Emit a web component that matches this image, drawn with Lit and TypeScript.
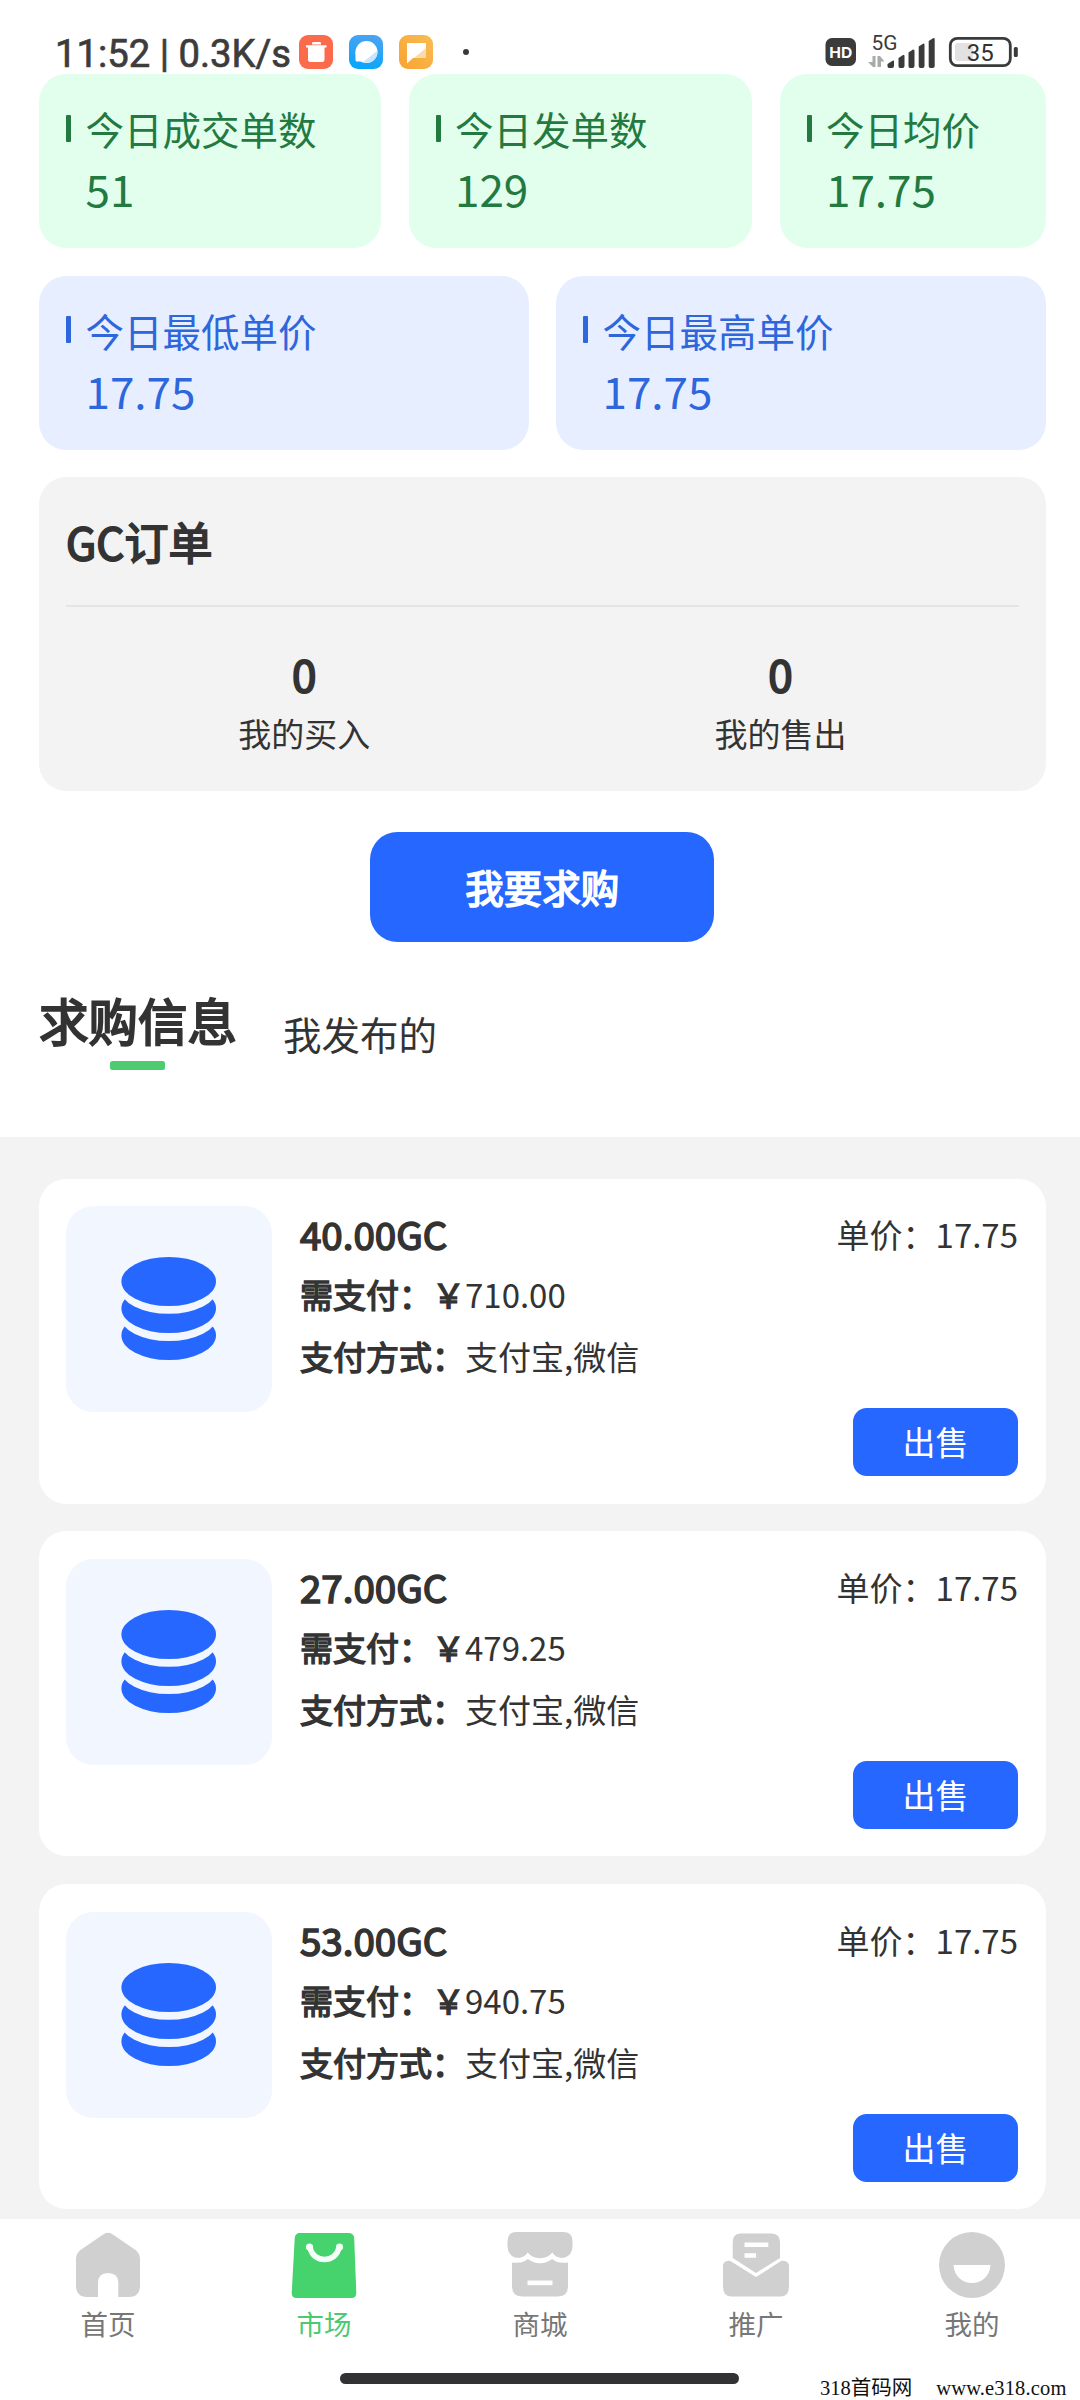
import { LitElement, html, css, svg } from "lit";
import { customElement, property } from "lit/decorators.js";

const FONT = css`"Noto Sans CJK SC", "Noto Sans", sans-serif`;

// Emboldens the regular face while keeping its advance widths.
const HEAVY = css`font-weight: 400; -webkit-text-stroke: 0.042em currentColor;`;

interface Order {
  amount: string;
  total: string;
  methods: string;
  price: string;
}

const ORDERS: Order[] = [
  { amount: "40.00GC", total: "710.00", methods: "支付宝,微信", price: "17.75" },
  { amount: "27.00GC", total: "479.25", methods: "支付宝,微信", price: "17.75" },
  { amount: "53.00GC", total: "940.75", methods: "支付宝,微信", price: "17.75" },
];

const NAV_ICONS = {
  home: svg`<path fill="#d0d0d0" d="M28.5 2.2 Q33 -.6 37.5 2.2 L60.5 18 Q65 21.5 65 27 V53 Q65 65 54 65 H43.3 V51 Q43.3 41 33 41 Q23 41 23 51 V65 H12 Q1 65 1 53 V27 Q1 21.5 5.500 18 Z"/>`,
  market: svg`<path fill="#46d26d" d="M9 1 H57.500 Q63 1 63.200 6.500 L65.300 61 Q65.300 66 60.500 66 H5.500 Q.7 66 .7 61 L3.700 6.500 Q4 1 9 1 Z"/><path fill="none" stroke="#f4fff7" stroke-width="5.500" stroke-linecap="round" d="M19 15.500 C22 31.500 45 31.500 48 15.500"/><circle cx="18.500" cy="15" r="3.600" fill="#f4fff7"/><circle cx="48.500" cy="15" r="3.600" fill="#f4fff7"/>`,
  shop: svg`<path fill="#d0d0d0" d="M10 0 H56 Q65.500 0 65.500 9 V14 Q65 25.500 54 26 Q48.500 25 45.300 20.500 Q41 26 33 26.300 Q25 26 20.700 20.500 Q17.500 25 12 26 Q1 25.500 .5 14 V9 Q.5 0 10 0 Z"/><path fill="#d0d0d0" d="M5 30.500 Q15 32 20.700 27 Q33 35.500 45.300 27 Q51 32 61 30.500 V54 Q61 64.500 51 64.500 H15 Q5 64.500 5 54 Z"/><path fill="#fff" d="M20.500 48.500 H45.500 V53.200 H20.500 Z"/>`,
  promo: svg`<path fill="#d0d0d0" d="M17 1.500 H49 Q57 2 57 10 V26 L33 41 L9.700 26 V10 Q9.700 2 17 1.500 Z"/><path fill="#d0d0d0" d="M0 33 Q1 28.500 7 28.700 L33 45 L58.500 28.700 Q65 28.500 66 33 V54 Q66 64.500 58 64.500 H8 Q0 64.500 0 54 Z"/><path fill="#fff" d="M21.500 10.500 H45.300 V15 H21.500 Z M21.500 21.300 H33 V25.700 H21.500 Z"/>`,
  mine: svg`<circle cx="33" cy="33" r="33" fill="#d0d0d0"/><path fill="#fff" d="M14.500 33 H51.500 C50 57 16 57 14.500 33 Z"/>`,
};

@customElement("status-bar")
class StatusBar extends LitElement {
  static styles = css`
    :host { display: block; height: 74px; box-sizing: border-box; padding: 35px 62px 0 54px; }
    .bar { display: flex; justify-content: space-between; height: 34px; }
    .left, .right { display: flex; align-items: center; }
    .clock { display: block; width: 245px; height: 34px; overflow: visible; font: 400 39px Roboto, sans-serif; fill: #3c3c3c; stroke: #3c3c3c; stroke-width: 0.7px; }
    .apps { display: flex; gap: 16px; }
    .dot { width: 6px; height: 6px; border-radius: 50%; background: #3a3a3a; margin-left: 30px; }
    svg { display: block; overflow: visible; }
    .hd { font: 700 15px Inter, sans-serif; }
    .net { font: 400 20px Roboto, sans-serif; }
    .pct { font: 400 24px Roboto, sans-serif; }
  `;
  render() {
    return html`<div class="bar">
      <div class="left">
        <svg class="clock" width="245" height="34" viewBox="0 0 245 34"><text x="1" y="31.500" textLength="236" lengthAdjust="spacingAndGlyphs">11:52 | 0.3K/s</text></svg>
        <div class="apps">
          <svg width="34" height="34" viewBox="0 0 34 34"><rect width="34" height="34" rx="9" fill="#fb6a4b"/><path fill="#fff" d="M13 8 Q13 7 14.500 7 H20.500 Q22 7 22 8 V9.500 H13 Z M7 10.300 H27.500 V12.500 H25.500 V24.500 Q25.500 27 23 27 H11.500 Q9 27 9 24.500 V12.500 H7 Z"/></svg>
          <svg width="34" height="34" viewBox="0 0 34 34"><defs><linearGradient id="b" x1="0.600" y1="0" x2="0.400" y2="1"><stop offset="0" stop-color="#4ba3f2"/><stop offset="1" stop-color="#08a6fb"/></linearGradient></defs><rect width="34" height="34" rx="9" fill="url(#b)"/><circle cx="17.500" cy="17" r="11" fill="#fff"/><path fill="#fff" d="M6.500 17 H12 V26.500 H8 Q6.500 26.500 6.500 25 Z"/><path fill="#c9e5fb" d="M28.400 15.500 A11 11 0 0 1 14 27.300 Z"/></svg>
          <svg width="34" height="34" viewBox="0 0 34 34"><defs><linearGradient id="y" x1="1" y1="0" x2="0" y2="1"><stop offset="0" stop-color="#f8bd55"/><stop offset="1" stop-color="#f9a231"/></linearGradient></defs><rect width="34" height="34" rx="9" fill="url(#y)"/><path fill="#fff" d="M8 8 H27 V23 H14 L8 28.500 Z"/><path fill="#fbdca8" d="M27 13 V23 H15 Z"/></svg>
        </div>
        <span class="dot"></span>
      </div>
      <svg class="right" width="194" height="34" viewBox="824 35 194 34">
        <rect x="825.500" y="38" width="30.500" height="28" rx="6.500" fill="#3b3b3b"/>
        <text class="hd" x="840.800" y="57.500" text-anchor="middle" fill="#fff" textLength="23" lengthAdjust="spacingAndGlyphs">HD</text>
        <text class="net" x="871.500" y="50.300" fill="#3b3b3b" textLength="26" lengthAdjust="spacingAndGlyphs">5G</text>
        <path fill="#aaa" d="M872.500 56 H875.500 V67 H873 L868 62 H872.500 Z M877.500 67 V56 H880 L884.500 61.500 H881 V67 Z"/>
        <path fill="#3b3b3b" d="M887.500 64 L893 60.500 Q894 60 894 61.500 V66 Q894 68 892 68 H889 Q887.500 68 887.500 66 Z M898.500 58 L903 55 Q904.500 54.500 904.500 56 V66 Q904.500 68 902.500 68 H900 Q898.500 68 898.500 66 Z M908.500 52.500 L913 49.500 Q914.500 49 914.500 51 V66 Q914.500 68 912.500 68 H910 Q908.500 68 908.500 66 Z M918.700 46.500 L923 43.800 Q924.500 43 924.500 45 V66 Q924.500 68 922.500 68 H920.500 Q918.700 68 918.700 66 Z M928.700 41 L933 38.200 Q934.700 37.500 934.700 39.500 V66 Q934.700 68 932.700 68 H930.500 Q928.700 68 928.700 66 Z"/>
        <rect x="950.300" y="38.300" width="60" height="27.400" rx="7" fill="#fff" stroke="#3b3b3b" stroke-width="2.800"/>
        <rect x="955" y="43" width="18" height="18" rx="3" fill="#e2e2e2"/>
        <rect x="1013.800" y="47" width="4" height="10" rx="1.500" fill="#3b3b3b"/>
        <text class="pct" x="980.300" y="61" text-anchor="middle" fill="#333">35</text>
      </svg>
    </div>`;
  }
}

@customElement("stat-card")
class StatCard extends LitElement {
  @property() label = "";
  @property() value = "";
  static styles = css`
    :host { display: block; box-sizing: border-box; height: 174px; padding: 27px 0 0 27px; border-radius: 27.5px; font-family: ${FONT}; }
    .label { display: flex; align-items: center; gap: 14.5px; font-size: 38.5px; line-height: 54px; white-space: nowrap; }
    .mark { width: 5px; height: 27px; border-radius: 1px; background: currentColor; }
    .value { padding: 6px 0 0 19.5px; font-size: 44px; line-height: 54px; }
  `;
  render() {
    return html`<div class="label"><span class="mark"></span><span>${this.label}</span></div>
      <div class="value">${this.value}</div>`;
  }
}

@customElement("order-card")
class OrderCard extends LitElement {
  @property({ attribute: false }) order!: Order;
  static styles = css`
    :host { display: flex; box-sizing: border-box; height: 325px; padding: 27.5px 27.5px 27.5px 27px; border-radius: 27.5px; background: #fff; color: #333; font-family: ${FONT}; font-size: 33px; line-height: 46px; }
    .thumb { width: 206px; height: 206px; border-radius: 27.5px; background: #f1f6ff; flex: none; }
    .thumb svg { display: block; }
    .info { flex: 1; padding-left: 28px; }
    .amount { font-size: 38.5px; line-height: 54px; ${HEAVY} }
    .pay { margin-top: 11px; }
    .method { margin-top: 16px; }
    b { ${HEAVY} }
    .side { display: flex; flex-direction: column; justify-content: space-between; align-items: flex-end; }
    .price { padding-top: 5px; }
    .sell { width: 165px; height: 68px; border-radius: 13.75px; background: #2567ff; color: #fff; text-align: center; line-height: 66px; }
  `;
  render() {
    const o = this.order;
    return html`<div class="thumb"><svg width="206" height="206" viewBox="0 0 206 206">
        <ellipse cx="102.700" cy="129.500" rx="47.300" ry="24.500" fill="#2567ff"/>
        <ellipse cx="102.700" cy="110.300" rx="48.500" ry="24.800" fill="#f1f6ff"/>
        <ellipse cx="102.700" cy="102.500" rx="47.300" ry="24.500" fill="#2567ff"/>
        <ellipse cx="102.700" cy="83" rx="48.500" ry="24.800" fill="#f1f6ff"/>
        <ellipse cx="102.700" cy="75.500" rx="47.300" ry="24.500" fill="#2567ff"/>
      </svg></div>
      <div class="info">
        <div class="amount">${o.amount}</div>
        <div class="pay"><b>需支付：￥</b>${o.total}</div>
        <div class="method"><b>支付方式：</b>${o.methods}</div>
      </div>
      <div class="side">
        <div class="price">单价：${o.price}</div>
        <div class="sell">出售</div>
      </div>`;
  }
}

@customElement("app-root")
class AppRoot extends LitElement {
  static styles = css`
    :host { display: flex; flex-direction: column; position: relative; width: 1080px; height: 2400px; overflow: hidden; background: #fff; color: #333; font-family: ${FONT}; }
    .top { padding: 0 34.5px 0 39px; height: 1062.500px; box-sizing: border-box; }
    .row { display: grid; gap: 27.5px; margin-bottom: 27.5px; }
    .three { grid-template-columns: 342px 343.5px 1fr; }
    .two { grid-template-columns: 1fr 1fr; }
    .green { background: #e2ffee; color: #227a41; }
    .blue { background: #e7eeff; color: #2e66dc; }
    .orders { box-sizing: border-box; height: 314px; border-radius: 27.5px; background: #f3f3f3; padding: 32px 27px 0; }
    .title { font-size: 44px; line-height: 64px; ${HEAVY} padding-bottom: 32px; border-bottom: 2px solid #e4e4e4; }
    .counts { display: grid; grid-template-columns: 1fr 1fr; text-align: center; padding-top: 34px; }
    .num { font-size: 44px; line-height: 64px; ${HEAVY} }
    .cap { font-size: 33px; line-height: 48px; margin-top: 4px; }
    .want { width: 344px; height: 110px; margin: 41px auto 0; border-radius: 27.5px; background: #2567ff; color: #fff; font-size: 38.5px; ${HEAVY} line-height: 108px; text-align: center; }
    .tabs { display: flex; align-items: flex-start; gap: 46px; padding-top: 42.5px; }
    .tab-on { font-size: 49.5px; line-height: 70px; ${HEAVY} }
    .line { width: 55px; height: 9px; border-radius: 2.5px; background: #4ccb70; margin: 6px 0 0 71px; }
    .tab { font-size: 38.5px; line-height: 56px; padding-top: 20px; }
    .list { flex: none; height: 1082px; box-sizing: border-box; overflow: hidden; background: #f3f3f3; padding: 42px 34.5px 0 39px; display: flex; flex-direction: column; gap: 27.75px; }
    order-card { flex: none; }
    .nav { display: grid; grid-template-columns: repeat(5, 1fr); padding-top: 13.5px; }
    .item { display: flex; flex-direction: column; align-items: center; gap: 6.5px; font-size: 27.5px; line-height: 36px; color: #777; }
    .active { color: #4cc972; }
    .pill { flex: none; width: 399px; height: 10.5px; border-radius: 6px; background: #323234; margin: 32.5px auto 0 340px; }
    .stamp { position: absolute; left: 820px; top: 2376px; display: flex; gap: 24px; font: 20.5px/24px "Liberation Serif", "Noto Sans CJK SC", serif; color: #111; white-space: nowrap; }
    .host { font-size: 20.5px; letter-spacing: 0.15px; }
  `;
  render() {
    const nav: [keyof typeof NAV_ICONS, string][] = [
      ["home", "首页"], ["market", "市场"], ["shop", "商城"], ["promo", "推广"], ["mine", "我的"],
    ];
    return html`
      <status-bar></status-bar>
      <div class="top">
        <div class="row three">
          <stat-card class="green" label="今日成交单数" value="51"></stat-card>
          <stat-card class="green" label="今日发单数" value="129"></stat-card>
          <stat-card class="green" label="今日均价" value="17.75"></stat-card>
        </div>
        <div class="row two">
          <stat-card class="blue" label="今日最低单价" value="17.75"></stat-card>
          <stat-card class="blue" label="今日最高单价" value="17.75"></stat-card>
        </div>
        <div class="orders">
          <div class="title">GC订单</div>
          <div class="counts">
            <div><div class="num">0</div><div class="cap">我的买入</div></div>
            <div><div class="num">0</div><div class="cap">我的售出</div></div>
          </div>
        </div>
        <div class="want">我要求购</div>
        <div class="tabs">
          <div class="tab-on">求购信息<div class="line"></div></div>
          <div class="tab">我发布的</div>
        </div>
      </div>
      <div class="list">${ORDERS.map((o) => html`<order-card .order=${o}></order-card>`)}</div>
      <div class="nav">
        ${nav.map(([icon, name]) => html`<div class="item ${icon === "market" ? "active" : ""}">
          <svg width="66" height="66" viewBox="0 0 66 66">${NAV_ICONS[icon]}</svg><span>${name}</span>
        </div>`)}
      </div>
      <div class="pill"></div>
      <div class="stamp"><span>318首码网</span><span class="host">www.e318.com</span></div>
    `;
  }
}
